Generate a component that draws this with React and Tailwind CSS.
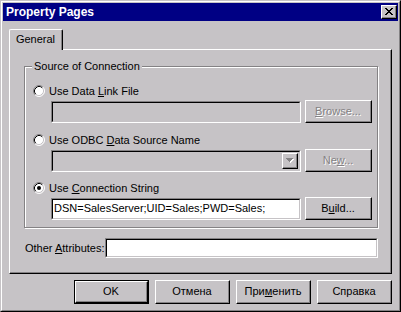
import React from 'react';

function Radio({ checked }) {
  return (
    <svg width="12" height="12" viewBox="0 0 12 12" className="shrink-0">
      <circle cx="6" cy="6" r="5" fill="#fff" />
      <path d="M2.11 9.89A5.5 5.5 0 0 1 9.89 2.11" stroke="#848284" fill="none" />
      <path d="M9.89 2.11A5.5 5.5 0 0 1 2.11 9.89" stroke="#fff" fill="none" />
      <path d="M2.82 9.18A4.5 4.5 0 0 1 9.18 2.82" stroke="#000" fill="none" />
      <path d="M9.18 2.82A4.5 4.5 0 0 1 2.82 9.18" stroke="#c6c3c6" fill="none" />
      {checked && <circle cx="6" cy="6" r="2" fill="#000" />}
    </svg>
  );
}

function Btn({ children, disabled, isDefault, className = '' }) {
  const face = (
    <div className="h-full border border-t-white border-l-white border-b-black border-r-black">
      <div className="h-full flex items-center justify-center border-b border-r border-b-[#848284] border-r-[#848284]">
        <span className={disabled ? 'text-[#848284] [text-shadow:1px_1px_0_#fff]' : 'text-black'}>
          {children}
        </span>
      </div>
    </div>
  );
  if (isDefault) {
    return <div className={`border border-black ${className}`}>{face}</div>;
  }
  return <div className={className}>{face}</div>;
}

function Field({ children, white, className = '' }) {
  return (
    <div className={`border border-t-[#848284] border-l-[#848284] border-b-white border-r-white ${className}`}>
      <div
        className={`h-full flex items-center border border-t-black border-l-black border-b-[#c6c3c6] border-r-[#c6c3c6] ${
          white ? 'bg-white' : 'bg-[#c6c3c6]'
        }`}
      >
        {children}
      </div>
    </div>
  );
}

function CloseGlyph() {
  return (
    <svg width="8" height="7" viewBox="0 0 8 7" shapeRendering="crispEdges">
      <path
        d="M0 0h2v1H0zM6 0h2v1H6zM1 1h2v1H1zM5 1h2v1H5zM2 2h4v1H2zM3 3h2v1H3zM2 4h4v1H2zM1 5h2v1H1zM5 5h2v1H5zM0 6h2v1H0zM6 6h2v1H6z"
        fill="#000"
      />
    </svg>
  );
}

function DropArrow() {
  return (
    <svg width="8" height="5" viewBox="0 0 8 5" shapeRendering="crispEdges">
      <path d="M1 1h7v1H1zM2 2h5v1H2zM3 3h3v1H3zM4 4h1v1H4z" fill="#fff" />
      <path d="M0 0h7v1H0zM1 1h5v1H1zM2 2h3v1H2zM3 3h1v1H3z" fill="#848284" />
    </svg>
  );
}

export default function App() {
  return (
    <div className="w-[401px] h-[312px] bg-[#c6c3c6] border border-t-[#c6c3c6] border-l-[#c6c3c6] border-b-black border-r-black font-['Liberation_Sans',Arial,sans-serif] text-[11px] leading-none text-black select-none">
      <div className="h-full flex flex-col border border-t-white border-l-white border-b-[#848284] border-r-[#848284] p-px">
        {/* title bar */}
        <div className="h-[18px] bg-[#000084] flex items-center justify-between pl-[3px] pr-[1px]">
          <span className="text-white font-bold text-[12px]">Property Pages</span>
          <div className="w-[16px] h-[14px] bg-[#c6c3c6] border border-t-white border-l-white border-b-black border-r-black">
            <div className="h-full flex items-center justify-center border-b border-r border-b-[#848284] border-r-[#848284]">
              <CloseGlyph />
            </div>
          </div>
        </div>

        <div className="flex-1 flex flex-col px-[6px] pt-[8px]">
          {/* tab */}
          <div className="flex">
            <div className="relative z-10 w-[54px] h-[21px] -mb-px bg-[#c6c3c6] border-t border-l border-t-white border-l-white border-r border-r-black rounded-tl-[2px] rounded-tr-[2px]">
              <div className="h-full flex items-center justify-center border-r border-r-[#848284] pb-[2px]">
                General
              </div>
            </div>
          </div>

          {/* panel */}
          <div className="h-[225px] border-t border-l border-t-white border-l-white border-b border-r border-b-black border-r-black">
            <div className="h-full flex flex-col border-b border-r border-b-[#848284] border-r-[#848284] pl-[14px] pr-[12px] pt-[16px]">
              {/* group box */}
              <div className="relative h-[162px] border border-[#848284] shadow-[1px_1px_0_#fff,inset_1px_1px_0_#fff] pl-[8px] pr-[5px] pt-[17px]">
                <span className="absolute left-[7px] -top-[6px] bg-[#c6c3c6] px-[2px]">Source of Connection</span>

                <div className="h-[14px] flex items-center gap-[4px]">
                  <Radio />
                  <span>
                    Use Data <u>L</u>ink File
                  </span>
                </div>
                <div className="h-[23px] mt-[2px] ml-[18px] flex items-center gap-[4px]">
                  <Field className="w-[250px] h-[22px]" />
                  <Btn disabled className="w-[67px] h-[23px]">
                    <u>B</u>rowse...
                  </Btn>
                </div>

                <div className="h-[14px] mt-[10px] flex items-center gap-[4px]">
                  <Radio />
                  <span>
                    Use ODBC <u>D</u>ata Source Name
                  </span>
                </div>
                <div className="h-[23px] mt-[2px] ml-[18px] flex items-center gap-[4px]">
                  <Field className="w-[250px] h-[22px]">
                    <div className="flex-1" />
                    <div className="w-[16px] h-[16px] mr-px border border-t-white border-l-white border-b-black border-r-black">
                      <div className="h-full flex items-center justify-center border-b border-r border-b-[#848284] border-r-[#848284]">
                        <DropArrow />
                      </div>
                    </div>
                  </Field>
                  <Btn disabled className="w-[67px] h-[23px]">
                    Ne<u>w</u>...
                  </Btn>
                </div>

                <div className="h-[14px] mt-[9px] flex items-center gap-[4px]">
                  <Radio checked />
                  <span>
                    Use <u>C</u>onnection String
                  </span>
                </div>
                <div className="h-[23px] mt-[2px] ml-[18px] flex items-center gap-[4px]">
                  <Field white className="w-[250px] h-[22px]">
                    <span className="pl-px">DSN=SalesServer;UID=Sales;PWD=Sales;</span>
                  </Field>
                  <Btn className="w-[67px] h-[23px]">
                    B<u>u</u>ild...
                  </Btn>
                </div>
              </div>

              {/* other attributes */}
              <div className="mt-[10px] h-[20px] flex items-center pl-px">
                <span className="w-[80px]">
                  Other <u>A</u>ttributes:
                </span>
                <Field white className="flex-1 h-[20px]" />
              </div>
            </div>
          </div>

          {/* buttons */}
          <div className="mt-[6px] flex justify-end gap-[6px]">
            <Btn isDefault className="w-[75px] h-[24px]">OK</Btn>
            <Btn className="w-[75px] h-[24px]">Отмена</Btn>
            <Btn className="w-[75px] h-[24px]">
              При<u>м</u>енить
            </Btn>
            <Btn className="w-[75px] h-[24px]">Справка</Btn>
          </div>
        </div>
      </div>
    </div>
  );
}
